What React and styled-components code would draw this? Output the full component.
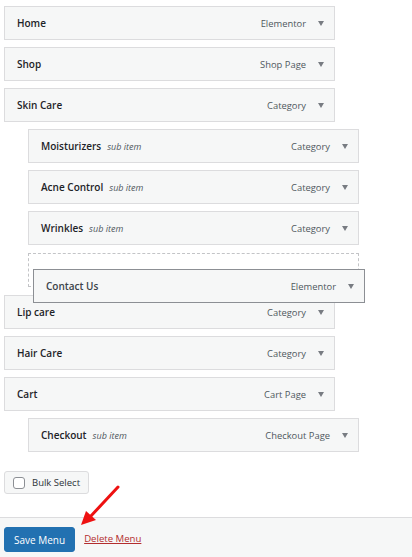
import React from "react";
import styled, { createGlobalStyle } from "styled-components";

const GlobalStyle = createGlobalStyle`
  html, body {
    margin: 0;
    padding: 0;
    background: #ffffff;
    font-family: "Open Sans", "Noto Sans", sans-serif;
    font-size: 10px;
    color: #1d2327;
  }
`;

const items = [
  { title: "Home", type: "Elementor", level: 0 },
  { title: "Shop", type: "Shop Page", level: 0 },
  { title: "Skin Care", type: "Category", level: 0 },
  { title: "Moisturizers", type: "Category", level: 1 },
  { title: "Acne Control", type: "Category", level: 1 },
  { title: "Wrinkles", type: "Category", level: 1 },
  { placeholder: true, level: 1 },
  { title: "Lip care", type: "Category", level: 0 },
  { title: "Hair Care", type: "Category", level: 0 },
  { title: "Cart", type: "Cart Page", level: 0 },
  { title: "Checkout", type: "Checkout Page", level: 1 },
];

const MenuItem = ({ title, type, level }) => (
  <Item $level={level}>
    <Title>
      {title}
      {level > 0 && <SubLabel>sub item</SubLabel>}
    </Title>
    <Controls>
      <ItemType>{type}</ItemType>
      <Caret />
    </Controls>
  </Item>
);

const App = () => (
  <>
    <GlobalStyle />
    <Page>
      <MenuList>
        {items.map((it, i) =>
          it.placeholder ? (
            <Placeholder key={i} $level={it.level}>
              <Dragged>
                <Title>Contact Us</Title>
                <Controls>
                  <ItemType>Elementor</ItemType>
                  <Caret />
                </Controls>
              </Dragged>
            </Placeholder>
          ) : (
            <MenuItem key={i} {...it} />
          )
        )}
      </MenuList>

      <BulkSelect>
        <Checkbox />
        Bulk Select
      </BulkSelect>

      <Footer>
        <SaveButton>Save Menu</SaveButton>
        <DeleteLink href="#">Delete Menu</DeleteLink>
      </Footer>

      <Arrow width="50" height="50" viewBox="0 0 50 50">
        <line x1="42" y1="3" x2="14" y2="33" stroke="#ee1111" strokeWidth="3" strokeLinecap="round" />
        <polygon points="5,41 10,27 20,36" fill="#ee1111" />
      </Arrow>
    </Page>
  </>
);

const Page = styled.div`
  position: relative;
  width: 412px;
  height: 557px;
  padding-top: 6px;
  box-sizing: border-box;
  overflow: hidden;
`;

const MenuList = styled.div`
  display: flex;
  flex-direction: column;
  gap: 7px;
  padding-left: 4px;
`;

const Item = styled.div`
  display: flex;
  align-items: center;
  justify-content: space-between;
  box-sizing: border-box;
  width: 331px;
  height: 34px;
  margin-left: ${(p) => p.$level * 24}px;
  padding: 0 9px 0 12px;
  background: #f6f7f7;
  border: 1px solid #dcdcde;
`;

const Title = styled.span`
  font-weight: 600;
  font-size: 10px;
  color: #1d2327;
  white-space: nowrap;
`;

const SubLabel = styled.span`
  margin-left: 6px;
  font-weight: 400;
  font-style: italic;
  font-size: 9px;
  color: #50575e;
`;

const Controls = styled.span`
  display: flex;
  align-items: center;
  gap: 12px;
`;

const ItemType = styled.span`
  font-size: 9.4px;
  color: #50575e;
`;

const Caret = styled.span`
  width: 0;
  height: 0;
  border-left: 3.5px solid transparent;
  border-right: 3.5px solid transparent;
  border-top: 5px solid #787c82;
  margin-right: 1px;
`;

const Placeholder = styled.div`
  position: relative;
  box-sizing: border-box;
  width: 331px;
  height: 34px;
  margin: 1px 0 1px ${(p) => p.$level * 24}px;
  border: 1px dashed #c3c4c7;
`;

const Dragged = styled.div`
  position: absolute;
  left: 4px;
  top: 15px;
  z-index: 2;
  display: flex;
  align-items: center;
  justify-content: space-between;
  box-sizing: border-box;
  width: 332px;
  height: 34px;
  padding: 0 9px 0 12px;
  background: #f6f7f7;
  border: 1px solid #8c8f94;

  ${Title} {
    color: #3c434a;
  }
`;

const BulkSelect = styled.label`
  display: inline-flex;
  align-items: center;
  gap: 7px;
  box-sizing: border-box;
  height: 23px;
  margin: 19px 0 0 4px;
  padding: 0 8px;
  background: #f6f7f7;
  border: 1px solid #dcdcde;
  border-radius: 3px;
  font-size: 9.5px;
  color: #2c3338;
`;

const Checkbox = styled.span`
  box-sizing: border-box;
  width: 12px;
  height: 12px;
  border: 1px solid #8c8f94;
  border-radius: 3px;
  background: #ffffff;
`;

const Footer = styled.div`
  display: flex;
  align-items: flex-start;
  gap: 9px;
  box-sizing: border-box;
  height: 40px;
  margin-top: 23px;
  padding: 9px 4px 0;
  background: #f6f7f7;
  border-top: 1px solid #dcdcde;
`;

const SaveButton = styled.button`
  height: 25px;
  padding: 0 9px;
  background: #2271b1;
  border: 1px solid #2271b1;
  border-radius: 3px;
  color: #ffffff;
  font-family: inherit;
  font-size: 10px;
`;

const DeleteLink = styled.a`
  margin-top: 5px;
  color: #b32d2e;
  font-size: 9.6px;
  text-decoration: underline;
`;

const Arrow = styled.svg`
  position: absolute;
  left: 76px;
  top: 484px;
  overflow: visible;
`;

export default App;
